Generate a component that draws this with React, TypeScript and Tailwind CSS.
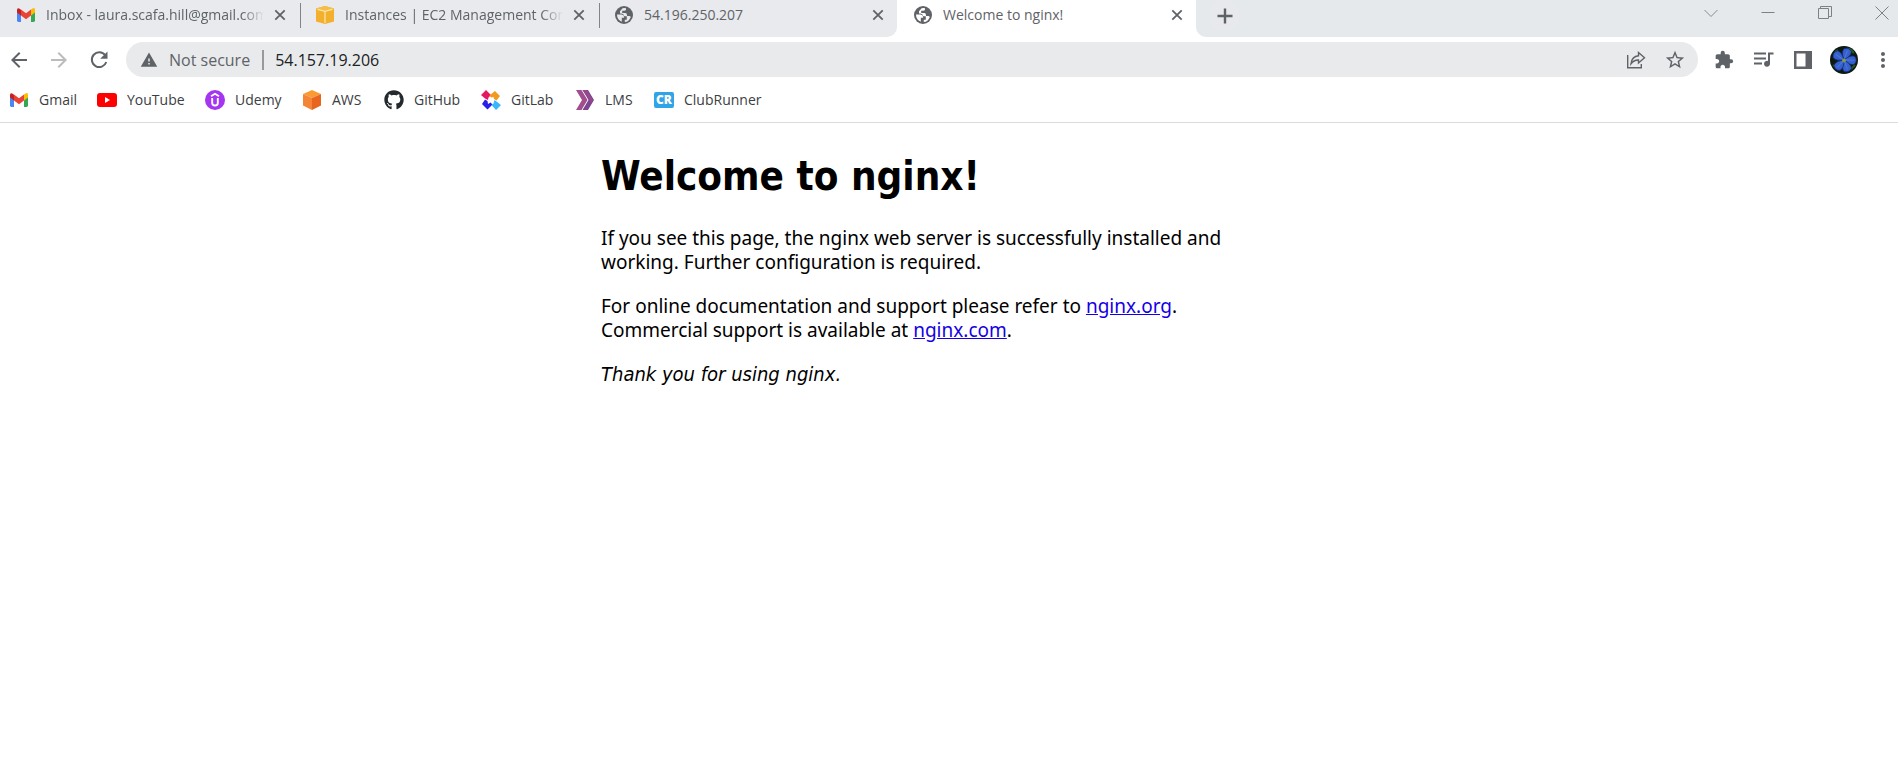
import type { ReactNode } from "react";
import { MdArrowBack, MdArrowForward, MdExtension, MdMoreVert, MdStarBorder, MdWarning } from "react-icons/md";
import { FaGithub } from "react-icons/fa";

function GmailIcon() {
  return (
    <svg viewBox="0 0 20 20" className="size-5 shrink-0" aria-hidden="true">
      <path d="M1 5v10.600q0 1.400 1.400 1.400H5V8.500z" fill="#4c86f5" />
      <path d="M19 5v10.600q0 1.400-1.400 1.400H15V8.500z" fill="#34a853" />
      <path d="M15 4.500 17 3.300q2-.8 2 1.700v2.500l-4 3z" fill="#fbbc04" />
      <path d="M1 7.500V5q0-2.500 2.200-1.600L5 4.700v5.800z" fill="#c5221f" />
      <path d="M5 4.500 10 8.300l5-3.800v6L10 14.200 5 10.500z" fill="#ea4335" />
    </svg>
  );
}

function CubeYellow() {
  return (
    <svg viewBox="0 0 20 20" className="size-5 shrink-0" aria-hidden="true">
      <path d="M1 3.500 10 1l9 2.500v13L10 19l-9-2.500z" fill="#f2b02c" />
      <path d="M1 3.500 10 1l9 2.500L10 6z" fill="#f5bd48" />
      <path d="M10 6.500V18M2.500 4.300 10 6.300l7.500-2" fill="none" stroke="#fde6ab" strokeWidth="1.200" />
    </svg>
  );
}

function GlobeIcon({ land }: { land: string }) {
  return (
    <svg viewBox="0 0 18 18" className="mx-px size-[18px] shrink-0" aria-hidden="true">
      <circle cx="9" cy="9" r="9" fill="#5f6368" />
      <path
        d="M2 8.500h4.500q2.600.2 2.600 2.600v.7H6.800v3.900Q2 13.800 2 8.500zM11 2.300q.5 2.500-2 2.500H7.200v2.100h3q1.800.2 1.800 2v1.200h2.200q1 0 1.600.8Q14 15.600 9.800 16v-2.200h2v-3.600H9.300Q8.700 7.800 6.500 7.500H5V5.200L7.600 2.200Q9.500 1.800 11 2.300z"
        fill={land}
      />
    </svg>
  );
}

function YouTubeIcon() {
  return (
    <svg viewBox="0 0 20 20" className="size-5 shrink-0" aria-hidden="true">
      <rect y="3" width="20" height="14" rx="3" fill="#f00" />
      <path d="m8 7 5 3-5 3z" fill="#fff" />
    </svg>
  );
}

function UdemyIcon() {
  return (
    <svg viewBox="0 0 20 20" className="size-5 shrink-0" aria-hidden="true">
      <circle cx="10" cy="10" r="10" fill="#a435f0" />
      <path d="m6 6.200 4-2.400 4 2.400M7.200 8v5q0 2.500 2.800 2.500t2.800-2.500V8" fill="none" stroke="#fff" strokeWidth="1.900" />
    </svg>
  );
}

function AwsIcon() {
  return (
    <svg viewBox="0 0 20 20" className="size-5 shrink-0" aria-hidden="true">
      <path d="m10 0 9 4-9 4-9-4z" fill="#fa9a32" />
      <path d="m1 4 9 4v12l-9-4.500z" fill="#f58536" />
      <path d="m19 4-9 4v12l9-4.500z" fill="#e8641f" />
    </svg>
  );
}

function GitLabIcon() {
  return (
    <svg viewBox="0 0 20 20" className="size-5 shrink-0" aria-hidden="true">
      <path d="M5 0 10 5 7.500 7.500 7 10 4 8.500 0 5z" fill="#e5195f" />
      <path d="m14 1 5 5-3.500 4.500L13 9l-.5-2L10 7.500 8.500 5.500z" fill="#f29a1f" />
      <path d="m4 9.500 2.500 1.500.5 3 2.500-1.500 2 2-5 5L1 14z" fill="#2a1fe8" />
      <path d="m13.500 10 2 1.500L20 15l-5 5-4.500-5 2-1.500z" fill="#38b8fa" />
    </svg>
  );
}

function LmsIcon() {
  return (
    <svg viewBox="0 0 20 20" className="size-5 shrink-0" aria-hidden="true">
      <path d="M1 0h5.500l6 10-6 10H1l6-10z" fill="#a04f8c" />
      <path d="M7.500 0H13l6 10-6 10H7.500l6-10z" fill="#7d4590" />
      <path d="M7.500 0H12l6 10-1.500 2.500z" fill="#96488c" />
    </svg>
  );
}

function ClubRunnerIcon() {
  return (
    <svg viewBox="0 0 20 20" className="size-5 shrink-0" aria-hidden="true">
      <rect y="2" width="20" height="16" rx="2" fill="#30a4e6" />
      <text x="10" y="14" textAnchor="middle" fontSize="12" fontWeight="800" fill="#fff">CR</text>
    </svg>
  );
}

function ReloadIcon() {
  return (
    <svg viewBox="0 0 24 24" className="size-6" aria-hidden="true">
      <path d="M18.200 7.200A7.400 7.400 0 1 0 19.300 14" fill="none" stroke="#5f6368" strokeWidth="2" />
      <path d="M20.500 3.500v7.300h-7.300z" fill="#5f6368" />
    </svg>
  );
}

function ShareIcon() {
  return (
    <svg viewBox="0 0 20 20" className="size-5" fill="none" stroke="#5f6368" strokeWidth="1.400" aria-hidden="true">
      <path d="M1.700 5v12.800h13.600V14" />
      <path d="M12.500 2.500 18.500 7.800l-6 5.200v-3Q8 9.800 5 13.800 5.800 6.500 12.500 5.800z" />
    </svg>
  );
}

function MusicListIcon() {
  return (
    <svg viewBox="0 0 20 18" className="h-[18px] w-5" aria-hidden="true">
      <path d="M0 2.500h12M0 7.500h12M0 12.500h8" stroke="#5f6368" strokeWidth="2" />
      <path d="M14 1.500h5.500v2H16v9a3 3 0 1 1-2-2.500z" fill="#5f6368" />
    </svg>
  );
}

function SidePanelIcon() {
  return (
    <svg viewBox="0 0 18 18" className="size-[18px]" aria-hidden="true">
      <path d="M0 0h18v18H0zM2.500 2.500v13h9v-13z" fill="#5f6368" fillRule="evenodd" />
    </svg>
  );
}

function FlowerAvatar() {
  const petals = [20, 92, 160, 222, 304];
  return (
    <svg viewBox="0 0 28 28" className="size-7" aria-hidden="true">
      <circle cx="14" cy="14" r="14" fill="#0c1a12" />
      <path d="M17 2.500q6 1 6.500 5M3 19l5 4M25 19l-4 4M5 6l3-2" stroke="#245a1c" strokeWidth="2" fill="none" />
      {petals.map((angle) => (
        <g key={angle} transform={`rotate(${angle} 14 14)`}>
          <path d="M14 14Q8.500 8 10 3.500 14 0 18 3.500 19.500 8 14 14z" fill="#3660cc" stroke="#142a78" strokeWidth=".7" />
          <path d="M14 12V4" stroke="#4f78e0" />
        </g>
      ))}
      <circle cx="14" cy="14.500" r="2" fill="#7f9a4c" />
    </svg>
  );
}

function Cross() {
  return (
    <svg viewBox="0 0 12 12" className="size-3" aria-hidden="true">
      <path d="m1.300 1.300 9.400 9.400m0-9.400-9.400 9.400" stroke="#5f6368" strokeWidth="1.800" />
    </svg>
  );
}

type TabProps = { icon: ReactNode; title: string; divider?: boolean; tone: string };

function Tab({ icon, title, divider, tone }: TabProps) {
  return (
    <div className={`flex min-w-0 max-w-[299px] flex-1 items-start pl-4 ${tone}`}>
      <div className="flex h-[30px] min-w-0 flex-1 items-center pr-3">
        {icon}
        <span
          className={`ml-[10px] min-w-0 flex-1 overflow-hidden whitespace-nowrap text-sm text-[#5f6368] ${divider ? "[mask-image:linear-gradient(to_right,#000_90%,transparent)]" : ""}`}
        >
          {title}
        </span>
        <button aria-label={`Close ${title}`} className="ml-2 grid size-4 place-items-center">
          <Cross />
        </button>
      </div>
      <span className={`z-10 -mr-[2px] mt-[3px] h-[25px] w-px ${divider ? "bg-[#808388]" : ""}`} />
    </div>
  );
}

const bookmarks = [
  { name: "Gmail", icon: <GmailIcon />, width: "w-[88px]" },
  { name: "YouTube", icon: <YouTubeIcon />, width: "w-[108px]" },
  { name: "Udemy", icon: <UdemyIcon />, width: "w-[97px]" },
  { name: "AWS", icon: <AwsIcon />, width: "w-[82px]" },
  { name: "GitHub", icon: <FaGithub className="size-5 shrink-0 text-[#24292e]" />, width: "w-[97px]" },
  { name: "GitLab", icon: <GitLabIcon />, width: "w-[94px]" },
  { name: "LMS", icon: <LmsIcon />, width: "w-[79px]" },
  { name: "ClubRunner", icon: <ClubRunnerIcon />, width: "w-[110px]" },
];

export default function App() {
  return (
    <div className="min-h-screen bg-white font-['Open_Sans',sans-serif]">
      <header className="border-b border-[#d9dbde]">
        <div className="flex h-[37px]">
          <Tab icon={<GmailIcon />} title="Inbox - laura.scafa.hill@gmail.com" divider tone="bg-[#e8eaed]" />
          <Tab icon={<CubeYellow />} title="Instances | EC2 Management Console" divider tone="bg-[#e8eaed]" />
          <Tab icon={<GlobeIcon land="#e8eaed" />} title="54.196.250.207" tone="rounded-br-[10px] bg-[#e8eaed]" />
          <Tab icon={<GlobeIcon land="#ffffff" />} title="Welcome to nginx!" tone="bg-white" />
          <div className="flex min-w-0 flex-1 items-start justify-between rounded-bl-[10px] bg-[#e5e9ec] pl-[13px]">
            <button aria-label="New tab" className="grid size-[31px] place-items-center rounded-full bg-[#e7e9ec]">
              <svg viewBox="0 0 16 16" className="size-4" aria-hidden="true">
                <path d="M8 .5v15M.5 8h15" stroke="#5f6368" strokeWidth="2.400" />
              </svg>
            </button>
            <div className="flex h-[25px] items-center gap-[43px] pr-[9px]">
              <button aria-label="Search tabs">
                <svg viewBox="0 0 14 14" className="size-[14px]" fill="none" stroke="#8a8d91" aria-hidden="true">
                  <path d="m.5 4 6.500 6.500L13.500 4" />
                </svg>
              </button>
              <button aria-label="Minimize">
                <svg viewBox="0 0 14 14" className="size-[14px]" fill="none" stroke="#808080" aria-hidden="true">
                  <path d="M.5 6.500h13" />
                </svg>
              </button>
              <button aria-label="Restore">
                <svg viewBox="0 0 14 14" className="size-[14px]" fill="none" stroke="#808080" aria-hidden="true">
                  <path d="M.5 2.500h10v10H.5zM2.500 2.500v-2h11v10h-3" />
                </svg>
              </button>
              <button aria-label="Close window">
                <svg viewBox="0 0 14 14" className="size-[14px]" fill="none" stroke="#808080" aria-hidden="true">
                  <path d="m.5.5 13 13m0-13-13 13" />
                </svg>
              </button>
            </div>
          </div>
        </div>

        <div className="flex h-[45px] items-center pl-[7px] pr-[3px] text-[#5f6368]">
          <button aria-label="Back">
            <MdArrowBack className="size-6" />
          </button>
          <button aria-label="Forward" className="ml-4 text-[#babcbe]">
            <MdArrowForward className="size-6" />
          </button>
          <button aria-label="Reload" className="ml-4">
            <ReloadIcon />
          </button>
          <div className="ml-[15px] flex h-[35px] min-w-0 flex-1 items-center rounded-full bg-[#e9eaec] pl-[14px] pr-3 text-base">
            <MdWarning className="size-[18px] shrink-0" />
            <span className="ml-[11px] whitespace-nowrap">Not secure</span>
            <span className="ml-3 h-5 w-[2px] bg-[#97999c]" />
            <input
              aria-label="Address"
              defaultValue="54.157.19.206"
              className="ml-[11px] min-w-0 flex-1 bg-transparent text-[#202124] outline-none"
            />
            <button aria-label="Share this page">
              <ShareIcon />
            </button>
            <button aria-label="Bookmark this page" className="ml-[18px]">
              <MdStarBorder className="size-[22px]" />
            </button>
          </div>
          <button aria-label="Extensions" className="ml-4">
            <MdExtension className="size-5" />
          </button>
          <button aria-label="Media controls" className="ml-5">
            <MusicListIcon />
          </button>
          <button aria-label="Side panel" className="ml-5">
            <SidePanelIcon />
          </button>
          <button aria-label="Profile" className="ml-[18px]">
            <FlowerAvatar />
          </button>
          <button aria-label="Menu" className="ml-[13px]">
            <MdMoreVert className="size-6" />
          </button>
        </div>

        <nav className="flex h-10 items-center pb-[5px] pl-[9px]">
          {bookmarks.map((b) => (
            <a key={b.name} href="#" className={`flex items-center gap-[10px] text-sm text-[#3c4043] ${b.width}`}>
              {b.icon}
              {b.name}
            </a>
          ))}
        </nav>
      </header>

      <main className="mx-auto flex max-w-[700px] flex-col pl-[2px] pt-[29px] font-['Noto_Sans',sans-serif] text-[19px]/6 text-black">
        <h1 className="mb-[26px] font-['DejaVu_Sans_Condensed','DejaVu_Sans',sans-serif] text-[40px]/[48px] font-bold">
          Welcome to nginx!
        </h1>
        <p className="mb-5">
          If you see this page, the nginx web server is successfully installed and
          <br />
          working. Further configuration is required.
        </p>
        <p className="mb-5">
          For online documentation and support please refer to{" "}
          <a href="#" className="text-[#1400e6] underline">nginx.org</a>.
          <br />
          Commercial support is available at{" "}
          <a href="#" className="text-[#1400e6] underline">nginx.com</a>.
        </p>
        <p className="font-['DejaVu_Sans_Condensed','DejaVu_Sans',sans-serif] text-xl/6 italic">
          Thank you for using nginx.
        </p>
      </main>
    </div>
  );
}
